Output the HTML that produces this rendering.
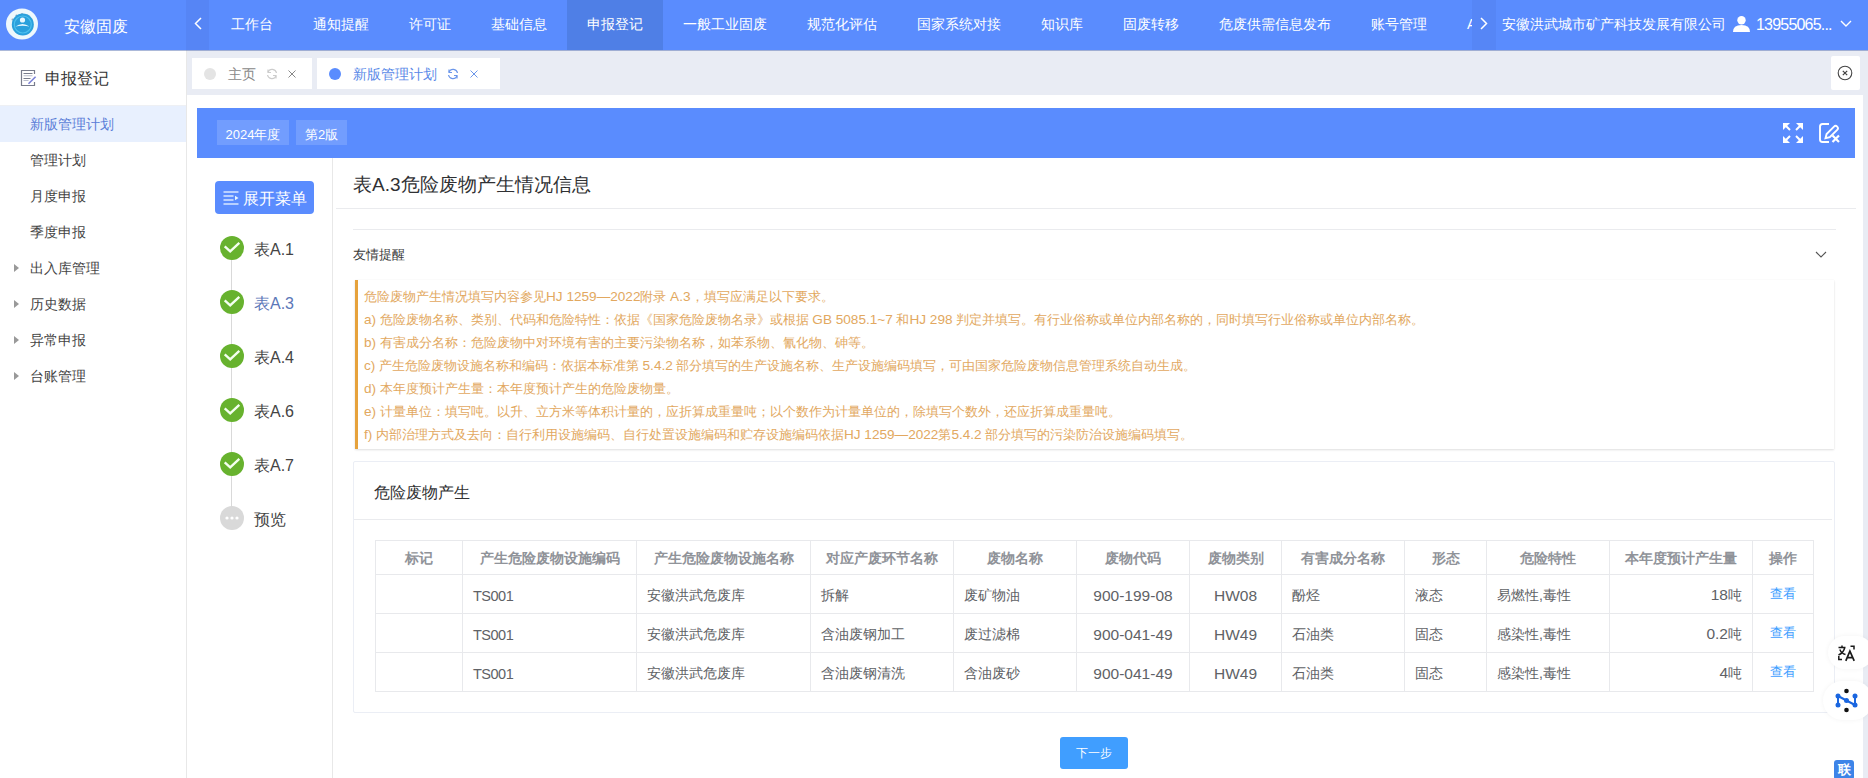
<!DOCTYPE html>
<html><head><meta charset="utf-8">
<style>
*{box-sizing:border-box;margin:0;padding:0}
html,body{width:1868px;height:778px;overflow:hidden;background:#fff;font-family:"Liberation Sans",sans-serif;font-size:14px;color:#333}
.abs{position:absolute}
#hdr{left:0;top:0;width:1868px;height:50px;background:#5a8cfe;box-shadow:0 1px 0 rgba(70,100,170,.45);z-index:2}
#hdr .t{color:#fff;font-size:14px;line-height:50px;white-space:nowrap}
.nav{top:-1px;height:51px;line-height:51px;color:#fff;font-size:14px;text-align:center;white-space:nowrap}
#side{left:0;top:50px;width:187px;height:728px;background:#fff;border-right:1px solid #e8e8e8}
.mi{left:0;width:186px;height:36px;line-height:36px;padding-left:30px;color:#444;font-size:14px}
.tri{left:14px;width:0;height:0;border-top:4px solid transparent;border-bottom:4px solid transparent;border-left:5px solid #999}
#tabs{left:187px;top:50px;width:1681px;height:45px;background:#e9ecf4}
.tab{top:8px;height:31px;background:#fff;line-height:31px;font-size:14px}
#cont{left:187px;top:95px;width:1676px;height:683px;background:#fff}
#banner{left:197px;top:108px;width:1658px;height:50px;background:#5a8cfe}
.tag{top:120px;height:25px;line-height:29px;background:rgba(255,255,255,.15);color:#fff;font-size:13px;text-align:center}
.step{left:220px;width:24px;height:24px;border-radius:50%;background:#67b22e}
.stxt{left:254px;font-size:16px;line-height:24px;color:#444}
.hl{height:1px;background:#eaebee}
.L{font-size:13.6px}
.al{left:364px;font-size:13px;color:#e2a860;white-space:nowrap;line-height:20px}
table{border-collapse:collapse;table-layout:fixed;position:absolute;left:375px;top:540px}
td,th{border:1px solid #e8e9ec;font-size:14px;color:#606266;white-space:nowrap;overflow:hidden}
th{height:34px;font-weight:bold;color:#909399;text-align:center;padding-top:2px}
td{height:39px;padding:3px 10px 0}
.n{font-size:15.5px}
.n1{font-size:14.5px;letter-spacing:-0.5px}
</style></head><body>
<!-- HEADER -->
<div id="hdr" class="abs">
  <svg class="abs" style="left:6px;top:8px" width="32" height="32" viewBox="0 0 32 32">
    <ellipse cx="16" cy="16" rx="16" ry="15.5" fill="#eef8fc"/>
    <circle cx="16" cy="6" r="1" fill="#9ab"/><circle cx="10.5" cy="7.5" r="1" fill="#9ab"/><circle cx="21.5" cy="7.5" r="1" fill="#9ab"/><circle cx="6.5" cy="11.5" r="1" fill="#9ab"/><circle cx="25.5" cy="11.5" r="1" fill="#9ab"/>
    <circle cx="16.8" cy="16.5" r="11" fill="#2aa0dc"/>
    <circle cx="16.8" cy="16.5" r="8.5" fill="none" stroke="#4cc0ee" stroke-width="1.2"/>
    <circle cx="16.5" cy="12" r="2.6" fill="#e8f7ff"/>
    <path d="M9.5 18.5 Q16.5 13.5 23.5 18.5 Q16.5 17 9.5 18.5Z" fill="#e8f7ff"/>
  </svg>
  <div class="abs t" style="left:64px;top:2px;font-size:16px">安徽固废</div>
  <div class="abs" style="left:186px;top:0;width:23px;height:50px;background:rgba(0,0,40,.045)"></div>
  <svg class="abs" style="left:193px;top:17px" width="10" height="13" viewBox="0 0 10 13"><path d="M8 1 L2.5 6.5 L8 12" stroke="#fff" stroke-width="1.5" fill="none"/></svg>
  <div class="abs nav" style="left:211px;width:82px">工作台</div>
  <div class="abs nav" style="left:293px;width:96px">通知提醒</div>
  <div class="abs nav" style="left:389px;width:82px">许可证</div>
  <div class="abs nav" style="left:471px;width:96px">基础信息</div>
  <div class="abs nav" style="left:567px;width:96px;background:#4f7fe6">申报登记</div>
  <div class="abs nav" style="left:663px;width:124px">一般工业固废</div>
  <div class="abs nav" style="left:787px;width:110px">规范化评估</div>
  <div class="abs nav" style="left:897px;width:124px">国家系统对接</div>
  <div class="abs nav" style="left:1021px;width:82px">知识库</div>
  <div class="abs nav" style="left:1103px;width:96px">固废转移</div>
  <div class="abs nav" style="left:1199px;width:152px">危废供需信息发布</div>
  <div class="abs nav" style="left:1351px;width:96px">账号管理</div>
  <div class="abs" style="left:1447px;top:0;width:25px;height:50px;overflow:hidden"><div class="abs nav" style="left:20px;width:40px;text-align:left">A</div></div>
  <div class="abs" style="left:1472px;top:0;width:24px;height:50px;background:rgba(0,0,40,.04)"></div>
  <svg class="abs" style="left:1479px;top:17px" width="10" height="13" viewBox="0 0 10 13"><path d="M2 1 L7.5 6.5 L2 12" stroke="#fff" stroke-width="1.5" fill="none"/></svg>
  <div class="abs t" style="left:1502px;top:-1px">安徽洪武城市矿产科技发展有限公司</div>
  <svg class="abs" style="left:1733px;top:16px" width="17" height="16" viewBox="0 0 17 16"><circle cx="8.5" cy="4.2" r="4.2" fill="#fff"/><path d="M0 16 Q0 9 8.5 9 Q17 9 17 16Z" fill="#fff"/></svg>
  <div class="abs t" style="left:1756px;top:0px;font-size:16px;letter-spacing:-0.8px">13955065...</div>
  <svg class="abs" style="left:1840px;top:20px" width="12" height="8" viewBox="0 0 12 8"><path d="M1 1 L6 6 L11 1" stroke="#fff" stroke-width="1.4" fill="none"/></svg>
</div>
<!-- SIDEBAR -->
<div id="side" class="abs"></div>
<svg class="abs" style="left:20px;top:69px" width="17" height="18" viewBox="0 0 17 18"><path d="M14.5 5 V1.5 H1.5 V16.5 H14.5 V13" stroke="#787c8c" stroke-width="1.2" fill="none"/><path d="M3.5 4.5 H12.5 M3.5 9.5 H10.5" stroke="#787c8c" stroke-width="1.1"/><path d="M3.5 6.8 H12.5 M3.5 11.5 H8.5" stroke="#b8bccc" stroke-width="1.1"/><path d="M8.5 14.8 L15.6 7.8" stroke="#7a80d6" stroke-width="1.6"/></svg>
<div class="abs" style="left:45px;top:69px;font-size:16px;line-height:20px;color:#333">申报登记</div>
<div class="abs" style="left:0;top:105px;width:186px;height:1px;background:#eef0f4"></div>
<div class="abs mi" style="top:106px;background:#e8f0fe;color:#5b7ed8">新版管理计划</div>
<div class="abs mi" style="top:142px">管理计划</div>
<div class="abs mi" style="top:178px">月度申报</div>
<div class="abs mi" style="top:214px">季度申报</div>
<div class="abs tri" style="top:264px"></div><div class="abs mi" style="top:250px">出入库管理</div>
<div class="abs tri" style="top:300px"></div><div class="abs mi" style="top:286px">历史数据</div>
<div class="abs tri" style="top:336px"></div><div class="abs mi" style="top:322px">异常申报</div>
<div class="abs tri" style="top:372px"></div><div class="abs mi" style="top:358px">台账管理</div>
<!-- TABS -->
<div id="tabs" class="abs"></div>
<div class="abs tab" style="left:192px;top:58px;width:120px"></div>
<div class="abs" style="left:204px;top:68px;width:12px;height:12px;border-radius:50%;background:#e4e4e4"></div>
<div class="abs" style="left:228px;top:59px;line-height:31px;color:#888">主页</div>
<svg class="abs" style="left:266px;top:68px" width="12" height="12" viewBox="0 0 12 12"><path d="M10.5 5 A4.5 4.5 0 0 0 2 4 M1.5 7 A4.5 4.5 0 0 0 10 8" stroke="#ccc" stroke-width="1.2" fill="none"/><path d="M2 1.5 V4.5 H5" stroke="#ccc" stroke-width="1.2" fill="none"/><path d="M10 10.5 V7.5 H7" stroke="#ccc" stroke-width="1.2" fill="none"/></svg>
<svg class="abs" style="left:288px;top:70px" width="8" height="8" viewBox="0 0 8 8"><path d="M0.5 0.5 L7.5 7.5 M7.5 0.5 L0.5 7.5" stroke="#888" stroke-width="1"/></svg>
<div class="abs tab" style="left:317px;top:58px;width:183px"></div>
<div class="abs" style="left:329px;top:68px;width:12px;height:12px;border-radius:50%;background:#5a8cfe"></div>
<div class="abs" style="left:353px;top:59px;line-height:31px;color:#5b8ae8">新版管理计划</div>
<svg class="abs" style="left:447px;top:68px" width="12" height="12" viewBox="0 0 12 12"><path d="M10.5 5 A4.5 4.5 0 0 0 2 4 M1.5 7 A4.5 4.5 0 0 0 10 8" stroke="#6b96ea" stroke-width="1.2" fill="none"/><path d="M2 1.5 V4.5 H5" stroke="#6b96ea" stroke-width="1.2" fill="none"/><path d="M10 10.5 V7.5 H7" stroke="#6b96ea" stroke-width="1.2" fill="none"/></svg>
<svg class="abs" style="left:470px;top:70px" width="8" height="8" viewBox="0 0 8 8"><path d="M0.5 0.5 L7.5 7.5 M7.5 0.5 L0.5 7.5" stroke="#6b96ea" stroke-width="1"/></svg>
<div class="abs" style="left:1831px;top:56px;width:29px;height:34px;background:#fff;border-radius:2px"></div>
<svg class="abs" style="left:1837px;top:65px" width="16" height="16" viewBox="0 0 16 16"><circle cx="8" cy="8" r="6.8" stroke="#444" stroke-width="1.1" fill="none"/><path d="M5.8 5.8 L10.2 10.2 M10.2 5.8 L5.8 10.2" stroke="#444" stroke-width="1.2"/></svg>
<!-- CONTENT -->
<div id="cont" class="abs"></div>
<div class="abs" style="left:1863px;top:95px;width:5px;height:683px;background:#e9ecf4"></div>
<div id="banner" class="abs"></div>
<div class="abs tag" style="left:217px;width:72px">2024年度</div>
<div class="abs tag" style="left:296px;width:51px">第2版</div>
<svg class="abs" style="left:1783px;top:123px" width="20" height="20" viewBox="0 0 20 20" fill="#fff" stroke="#fff" stroke-width="2"><path d="M0 0 H7 L0 7Z" stroke="none"/><path d="M2 2 L7 7"/><path d="M20 0 H13 L20 7Z" stroke="none"/><path d="M18 2 L13 7"/><path d="M0 20 V13 L7 20Z" stroke="none"/><path d="M2 18 L7 13"/><path d="M20 20 V13 L13 20Z" stroke="none"/><path d="M18 18 L13 13"/></svg>
<svg class="abs" style="left:1819px;top:123px" width="21" height="20" viewBox="0 0 21 20" fill="none" stroke="#fff" stroke-width="1.9"><path d="M10 1 H3.5 Q1 1 1 3.5 V16.5 Q1 19 3.5 19 H10"/><path d="M6.5 15.2 L7.6 11 L15 3.6 Q16.6 2 18.2 3.6 Q19.8 5.2 18.2 6.8 L10.8 14.2 Z"/><path d="M13.5 12.5 L20 19 M20 12.5 L13.5 19" stroke-width="2.2"/></svg>
<!-- LEFT STEPS -->
<div class="abs" style="left:332px;top:158px;width:1px;height:620px;background:#e8e8e8"></div>
<div class="abs" style="left:215px;top:181px;width:99px;height:33px;border-radius:4px;background:#5a8cfe;color:#fff;font-size:16px;line-height:35px;padding-left:28px">展开菜单</div>
<svg class="abs" style="left:223px;top:190px" width="17" height="16" viewBox="0 0 17 16" fill="none" stroke="#d8e6ff" stroke-width="1.7"><path d="M0.5 2 H15.5 M0.5 6 H10.5 M0.5 10 H10.5 M0.5 14 H15.5"/><path d="M12 5.7 L15.5 8 L12 10.3Z" fill="#e8f6ff" stroke="none"/></svg>
<div class="abs" style="left:231px;top:260px;width:1px;height:258px;background:#d9d9d9"></div>
<div class="abs step" style="top:236px"></div>
<svg class="abs" style="left:220px;top:236px" width="24" height="24" viewBox="0 0 24 24"><path d="M4.7 10.4 L10.2 15.3 L19.3 6.9" stroke="#f4fff0" stroke-width="2.4" fill="none"/></svg>
<div class="abs stxt" style="top:238px;color:#444">表A.1</div>
<div class="abs step" style="top:290px"></div>
<svg class="abs" style="left:220px;top:290px" width="24" height="24" viewBox="0 0 24 24"><path d="M4.7 10.4 L10.2 15.3 L19.3 6.9" stroke="#f4fff0" stroke-width="2.4" fill="none"/></svg>
<div class="abs stxt" style="top:292px;color:#5b77b8">表A.3</div>
<div class="abs step" style="top:344px"></div>
<svg class="abs" style="left:220px;top:344px" width="24" height="24" viewBox="0 0 24 24"><path d="M4.7 10.4 L10.2 15.3 L19.3 6.9" stroke="#f4fff0" stroke-width="2.4" fill="none"/></svg>
<div class="abs stxt" style="top:346px;color:#444">表A.4</div>
<div class="abs step" style="top:398px"></div>
<svg class="abs" style="left:220px;top:398px" width="24" height="24" viewBox="0 0 24 24"><path d="M4.7 10.4 L10.2 15.3 L19.3 6.9" stroke="#f4fff0" stroke-width="2.4" fill="none"/></svg>
<div class="abs stxt" style="top:400px;color:#444">表A.6</div>
<div class="abs step" style="top:452px"></div>
<svg class="abs" style="left:220px;top:452px" width="24" height="24" viewBox="0 0 24 24"><path d="M4.7 10.4 L10.2 15.3 L19.3 6.9" stroke="#f4fff0" stroke-width="2.4" fill="none"/></svg>
<div class="abs stxt" style="top:454px;color:#444">表A.7</div>
<div class="abs step" style="top:506px;background:#d9d9d9"></div>
<svg class="abs" style="left:220px;top:506px" width="24" height="24" viewBox="0 0 24 24"><circle cx="7" cy="12" r="1.6" fill="#fff"/><circle cx="12" cy="12" r="1.6" fill="#fff"/><circle cx="17" cy="12" r="1.6" fill="#fff"/></svg>
<div class="abs stxt" style="top:508px">预览</div>
<!-- MAIN -->
<div class="abs" style="left:353px;top:174px;font-size:19px;line-height:22px;color:#303133">表A.3危险废物产生情况信息</div>
<div class="abs hl" style="left:336px;top:208px;width:1520px"></div>
<div class="abs hl" style="left:353px;top:229px;width:1483px"></div>
<div class="abs" style="left:353px;top:245px;font-size:13px;line-height:20px;color:#3a3a3a">友情提醒</div>
<svg class="abs" style="left:1815px;top:251px" width="12" height="7" viewBox="0 0 12 7"><path d="M1 1 L6 6 L11 1" stroke="#555" stroke-width="1.1" fill="none"/></svg>
<div class="abs" style="left:355px;top:280px;width:1479px;height:169px;background:#fff;box-shadow:0 1px 2px rgba(0,0,0,.12),0 0 1px rgba(0,0,0,.06);border-left:3px solid #e6a23c"></div>
<div class="abs al" style="margin-top:1px;top:286px">危险废物产生情况填写内容参见<span class="L">HJ 1259—2022</span>附录 <span class="L">A.3</span>，填写应满足以下要求。</div>
<div class="abs al" style="margin-top:1px;top:309px"><span class="L">a)</span> 危险废物名称、类别、代码和危险特性：依据《国家危险废物名录》或根据 <span class="L">GB 5085.1~7</span> 和<span class="L">HJ 298</span> 判定并填写。有行业俗称或单位内部名称的，同时填写行业俗称或单位内部名称。</div>
<div class="abs al" style="margin-top:1px;top:332px"><span class="L">b)</span> 有害成分名称：危险废物中对环境有害的主要污染物名称，如苯系物、氰化物、砷等。</div>
<div class="abs al" style="margin-top:1px;top:355px"><span class="L">c)</span> 产生危险废物设施名称和编码：依据本标准第 <span class="L">5.4.2</span> 部分填写的生产设施名称、生产设施编码填写，可由国家危险废物信息管理系统自动生成。</div>
<div class="abs al" style="margin-top:1px;top:378px"><span class="L">d)</span> 本年度预计产生量：本年度预计产生的危险废物量。</div>
<div class="abs al" style="margin-top:1px;top:401px"><span class="L">e)</span> 计量单位：填写吨。以升、立方米等体积计量的，应折算成重量吨；以个数作为计量单位的，除填写个数外，还应折算成重量吨。</div>
<div class="abs al" style="margin-top:1px;top:424px"><span class="L">f)</span> 内部治理方式及去向：自行利用设施编码、自行处置设施编码和贮存设施编码依据<span class="L">HJ 1259—2022</span>第<span class="L">5.4.2</span> 部分填写的污染防治设施编码填写。</div>
<!-- CARD -->
<div class="abs" style="left:353px;top:461px;width:1482px;height:252px;border:1px solid #ebeef5;border-radius:2px;background:#fff"></div>
<div class="abs" style="left:374px;top:483px;font-size:16px;line-height:20px;color:#303133">危险废物产生</div>
<div class="abs hl" style="left:354px;top:519px;width:1478px"></div>
<table>
<colgroup><col style="width:87px"><col style="width:174px"><col style="width:174px"><col style="width:143px"><col style="width:123px"><col style="width:113px"><col style="width:92px"><col style="width:123px"><col style="width:82px"><col style="width:123px"><col style="width:143px"><col style="width:61px"></colgroup>
<tr><th>标记</th><th>产生危险废物设施编码</th><th>产生危险废物设施名称</th><th>对应产废环节名称</th><th>废物名称</th><th>废物代码</th><th>废物类别</th><th>有害成分名称</th><th>形态</th><th>危险特性</th><th>本年度预计产生量</th><th>操作</th></tr>
<tr><td></td><td><span class="n1">TS001</span></td><td>安徽洪武危废库</td><td>拆解</td><td>废矿物油</td><td style="text-align:center"><span class="n">900-199-08</span></td><td style="text-align:center"><span class="n">HW08</span></td><td>酚烃</td><td>液态</td><td>易燃性,毒性</td><td style="text-align:right"><span class="n">18</span>吨</td><td style="text-align:center;color:#409eff;font-size:13px;padding-top:0">查看</td></tr>
<tr><td></td><td><span class="n1">TS001</span></td><td>安徽洪武危废库</td><td>含油废钢加工</td><td>废过滤棉</td><td style="text-align:center"><span class="n">900-041-49</span></td><td style="text-align:center"><span class="n">HW49</span></td><td>石油类</td><td>固态</td><td>感染性,毒性</td><td style="text-align:right"><span class="n">0.2</span>吨</td><td style="text-align:center;color:#409eff;font-size:13px;padding-top:0">查看</td></tr>
<tr><td></td><td><span class="n1">TS001</span></td><td>安徽洪武危废库</td><td>含油废钢清洗</td><td>含油废砂</td><td style="text-align:center"><span class="n">900-041-49</span></td><td style="text-align:center"><span class="n">HW49</span></td><td>石油类</td><td>固态</td><td>感染性,毒性</td><td style="text-align:right"><span class="n">4</span>吨</td><td style="text-align:center;color:#409eff;font-size:13px;padding-top:0">查看</td></tr>
</table>
<div class="abs" style="left:1060px;top:737px;width:68px;height:32px;border-radius:3px;background:#409eff;color:#fff;font-size:12px;line-height:32px;text-align:center">下一步</div>
<!-- FLOAT -->
<div class="abs" style="left:1828px;top:636px;width:45px;height:33px;border-radius:17px;background:#fff;box-shadow:0 0 5px rgba(0,0,0,.05)"></div>
<svg class="abs" style="left:1837px;top:645px" width="19" height="17" viewBox="0 0 19 17" fill="none" stroke="#1a1a1a" stroke-width="1.5"><path d="M1.5 2.5 H8.5 M5 0.5 V2.5 M7.8 2.5 Q6.5 8 1.5 10 M2.8 4.5 Q4.5 8.5 8.5 9.5"/><path d="M13.5 1.2 H17 V4.5"/><path d="M1.8 11 V14.6 H5"/><path d="M8.8 15.8 L12.9 6.2 L17.2 15.8 M10.2 12.6 H15.8" stroke-width="1.7"/></svg>
<div class="abs" style="left:1823px;top:681px;width:50px;height:39px;border-radius:20px;background:#fff;box-shadow:0 0 5px rgba(0,0,0,.05)"></div>
<svg class="abs" style="left:1835px;top:688px" width="23" height="25" viewBox="0 0 23 25"><path d="M3 8 L3 17 M3 8 L11.5 12.5 L20 17 M20 8 L20 17" stroke="#1a66e0" stroke-width="2" fill="none"/><circle cx="3" cy="8" r="2.5" fill="#1a66e0"/><circle cx="3" cy="17" r="2.5" fill="#1a66e0"/><circle cx="20" cy="8" r="2.5" fill="#1a66e0"/><circle cx="20" cy="17" r="2.5" fill="#1a66e0"/><circle cx="11.5" cy="12.5" r="2.5" fill="#1a66e0"/><circle cx="11.5" cy="3" r="2.3" fill="#111"/><circle cx="11.5" cy="22" r="2.3" fill="#111"/></svg>
<div class="abs" style="left:1834px;top:760px;width:20px;height:20px;border-radius:3px;background:#3d84e8;color:#fff;font-size:13px;line-height:20px;text-align:center;font-weight:bold">联</div>
</body></html>
